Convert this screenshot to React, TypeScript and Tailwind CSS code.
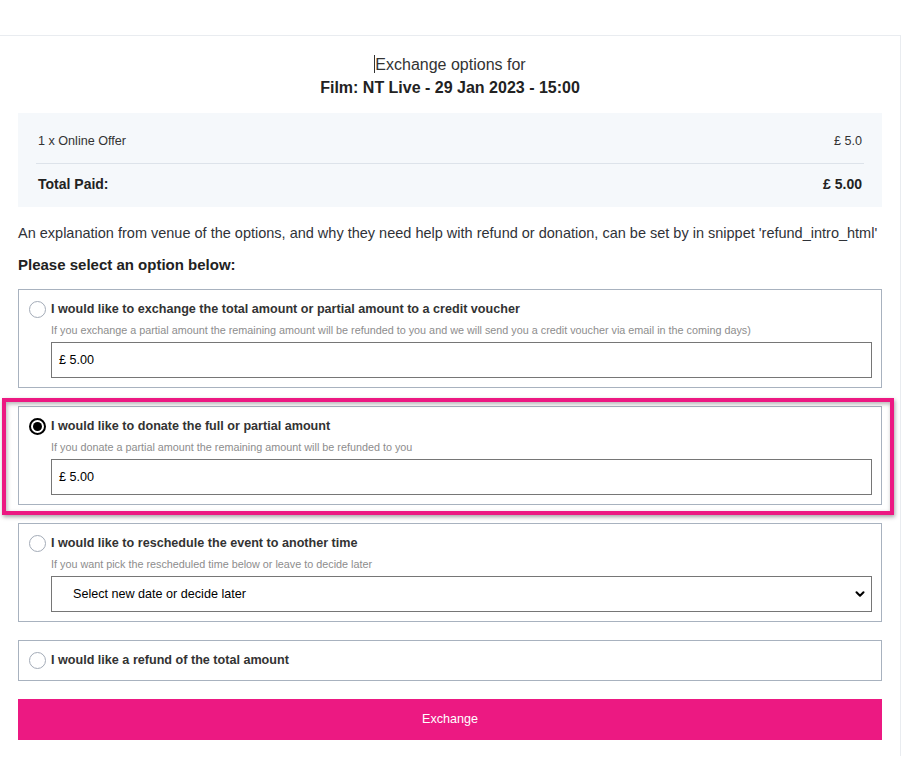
import { ChevronDown } from 'lucide-react';

type Option = {
  id: string;
  label: string;
  hint?: string;
  field?: 'amount' | 'date';
};

const options: Option[] = [
  {
    id: 'voucher',
    label:
      'I would like to exchange the total amount or partial amount to a credit voucher',
    hint: 'If you exchange a partial amount the remaining amount will be refunded to you and we will send you a credit voucher via email in the coming days)',
    field: 'amount',
  },
  {
    id: 'donate',
    label: 'I would like to donate the full or partial amount',
    hint: 'If you donate a partial amount the remaining amount will be refunded to you',
    field: 'amount',
  },
  {
    id: 'reschedule',
    label: 'I would like to reschedule the event to another time',
    hint: 'If you want pick the rescheduled time below or leave to decide later',
    field: 'date',
  },
  {
    id: 'refund',
    label: 'I would like a refund of the total amount',
  },
];

const Radio = ({ checked }: { checked: boolean }) =>
  checked ? (
    <span className="flex h-[17px] w-[17px] shrink-0 items-center justify-center rounded-full border-2 border-black bg-white">
      <span className="h-[9px] w-[9px] rounded-full bg-black" />
    </span>
  ) : (
    <span className="h-[17px] w-[17px] shrink-0 rounded-full border border-[#a3abb7] bg-white" />
  );

const OptionCard = ({ option, selected }: { option: Option; selected: boolean }) => (
  <div
    className={`border border-[#a8b2bf] bg-white pt-[10px] pr-[9px] pl-[10px] ${
      option.field ? 'pb-[9px]' : 'pb-[11px]'
    }`}
  >
    <label className="flex h-[18px] items-center gap-[5px]">
      <Radio checked={selected} />
      <span className="text-[12.6px] leading-[18px] font-bold text-[#333]">
        {option.label}
      </span>
    </label>
    {option.hint && (
      <div className="mt-[5px] pl-[22px] text-[10.8px] leading-[14px] text-[#8d8d8d]">
        {option.hint}
      </div>
    )}
    {option.field === 'amount' && (
      <div className="mt-[5px] ml-[22px] flex h-[36px] items-center border border-[#767676] px-[7px] text-[12.6px] text-black">
        £ 5.00
      </div>
    )}
    {option.field === 'date' && (
      <div className="mt-[5px] ml-[22px] flex h-[36px] items-center justify-between border border-[#767676] pr-[4px] pl-[21px] text-[12.6px] text-black">
        <span>Select new date or decide later</span>
        <ChevronDown size={14} strokeWidth={3.5} className="text-black" />
      </div>
    )}
  </div>
);

const App = () => {
  const selected = 'donate';

  return (
    <div className="min-h-screen bg-white font-['Liberation_Sans',Arial,sans-serif] text-[#333]">
      <div className="h-[35px]" />

      <main className="w-[901px] border-t border-r border-[#e9ecf0] px-[18px] pt-[16px] pb-[16px]">
        <div className="text-center text-[16px] leading-[23px]">
          <div>
            <span className="inline-block h-[18px] w-px translate-y-[3px] bg-[#333]" />
            Exchange options for
          </div>
          <div className="font-bold text-[#222]">Film: NT Live - 29 Jan 2023 - 15:00</div>
        </div>

        {/* order summary */}
        <div className="mt-[14px] bg-[#f5f8fb] px-[18px]">
          <div className="flex justify-between px-[2px] pt-[18px] pb-[12px] text-[12.6px] leading-[20px]">
            <span>1 x Online Offer</span>
            <span>£ 5.0</span>
          </div>
          <div className="border-t border-[#dde3ea]" />
          <div className="flex justify-between px-[2px] pt-[10px] pb-[13px] text-[14px] leading-[20px] font-bold text-[#222]">
            <span>Total Paid:</span>
            <span>£ 5.00</span>
          </div>
        </div>

        <p className="mt-[14px] text-[14.5px] leading-[24px] text-[#2f3238]">
          An explanation from venue of the options, and why they need help with refund or
          donation, can be set by in snippet 'refund_intro_html'
        </p>

        <div className="mt-[10px] text-[15px] leading-[20px] font-bold text-[#222]">
          Please select an option below:
        </div>

        <div className="mt-[14px] flex flex-col gap-[18px]">
          {options.map((o) =>
            o.id === selected ? (
              <div key={o.id} className="relative">
                <OptionCard option={o} selected />
                <div className="pointer-events-none absolute -top-[8px] -right-[12px] -bottom-[10px] -left-[16px] border-4 border-[#ec1982] shadow-[1px_2px_4px_rgba(0,0,0,0.35),inset_1px_2px_4px_rgba(0,0,0,0.3)]" />
              </div>
            ) : (
              <OptionCard key={o.id} option={o} selected={false} />
            ),
          )}

          <button className="h-[41px] w-full bg-[#ec1982] text-[12.6px] text-white">
            Exchange
          </button>
        </div>
      </main>
    </div>
  );
};

export default App;
